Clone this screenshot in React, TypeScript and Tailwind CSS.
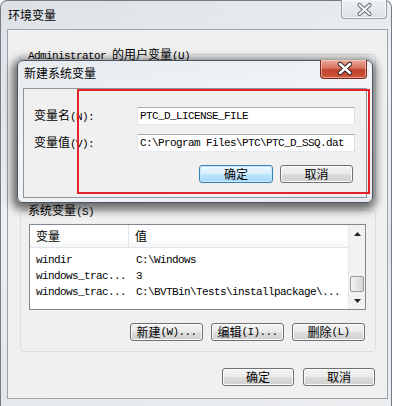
import React from "react";

const Mx = ({ s }: { s: string }) => (
  <>
    {(s.match(/[\x00-\x7f]+|[^\x00-\x7f]+/g) || []).map((p, i) =>
      /^[\x00-\x7f]/.test(p) ? (
        <span key={i} className="font-['Liberation_Mono',monospace] text-[11px] tracking-[-0.6px] whitespace-pre">
          {p}
        </span>
      ) : (
        <span key={i} className="text-[12px]">
          {p}
        </span>
      )
    )}
  </>
);

const Btn = ({ label, w, primary }: { label: string; w: string; primary?: boolean }) => (
  <div
    className={
      primary
        ? `${w} h-[18px] rounded-[3px] border border-[#3c7fb1] bg-[linear-gradient(#eaf6fd,#d9f0fc_50%,#bee6fd_50%,#a7d9f5)] shadow-[inset_0_0_0_1px_#c4e8fb] flex items-center justify-center leading-[14px] text-black`
        : `${w} h-[18px] rounded-[3px] border border-[#707070] bg-[linear-gradient(#f2f2f2,#ebebeb_50%,#dddddd_50%,#cfcfcf)] shadow-[inset_0_0_0_1px_#fbfbfb] flex items-center justify-center leading-[14px] text-black`
    }
  >
    <Mx s={label} />
  </div>
);

const CloseGray = () => (
  <div className="-mt-[1px] mr-[4px] w-[46px] h-[19px] rounded-b-[4px] border border-t-0 border-[#9aa1a9] bg-[linear-gradient(#eef0f2,#dde1e5)] shadow-[inset_0_0_0_1px_#f7f8f9]">
    <svg width="44" height="18" viewBox="0 0 44 18">
      <path d="M17.5 5 L27.5 14 M27.5 5 L17.5 14" stroke="#6d737a" strokeWidth="4.2" strokeLinecap="round" />
      <path d="M17.5 5 L27.5 14 M27.5 5 L17.5 14" stroke="#f4f5f6" strokeWidth="2" strokeLinecap="round" />
    </svg>
  </div>
);

const CloseRed = () => (
  <div className="-mt-[1px] mr-[5px] w-[47px] h-[19px] rounded-b-[4px] border border-t-0 border-[#7a2a22] bg-[linear-gradient(#e9a99c,#d9735f_45%,#c2412b_55%,#cf5a3c)] shadow-[inset_0_0_0_1px_rgba(255,220,210,0.55)]">
    <svg width="45" height="18" viewBox="0 0 45 18">
      <path d="M19 4 L29 13 M29 4 L19 13" stroke="#3b2a28" strokeWidth="4.6" strokeLinecap="round" />
      <path d="M19 4 L29 13 M29 4 L19 13" stroke="#ffffff" strokeWidth="2.4" strokeLinecap="round" />
    </svg>
  </div>
);

const Row = ({ a, b }: { a: string; b: string }) => (
  <div className="h-[16px] flex items-center leading-[14px]">
    <div className="w-[100px] pl-[6px]">
      <Mx s={a} />
    </div>
    <div className="pl-[6px]">
      <Mx s={b} />
    </div>
  </div>
);

export default function App() {
  return (
    <div className="w-[394px] h-[406px] bg-white relative overflow-hidden font-['Noto_Sans_CJK_SC',sans-serif] text-[12px] text-black">
      {/* outer window */}
      <div className="w-[392px] h-[406px] flex flex-col rounded-t-[7px] border border-b-0 border-[#737c86] bg-[linear-gradient(160deg,#dde1e6,#eef0f2_40%,#e4e7ea_70%,#eceef0)]">
        <div className="h-[28px] flex items-start justify-between">
          <div className="pl-[7px] pt-[7px] leading-[14px] text-[12px]">环境变量</div>
          <CloseGray />
        </div>
        <div className="ml-[6px] mr-[3px] h-[370px] border border-[#9ca3ab] bg-[#f0f0f0] flex flex-col">
          <fieldset className="mt-[17px] ml-[12px] mr-[11px] h-[151px] border border-[#d5dfe5] rounded-[3px] p-0 min-w-0">
            <legend className="ml-[6px] px-[1px] h-[14px] leading-[14px]">
              <Mx s="Administrator 的用户变量(U)" />
            </legend>
          </fieldset>
          <fieldset className="mt-[5px] ml-[12px] mr-[11px] border border-[#d5dfe5] rounded-[3px] px-0 pt-[7px] pb-[10px] min-w-0">
            <legend className="ml-[6px] px-[1px] h-[14px] leading-[14px]">
              <Mx s="系统变量(S)" />
            </legend>
            <div className="ml-[8px] w-[337px] h-[86px] border border-[#828790] bg-white flex">
              <div className="flex-1 flex flex-col">
                <div className="h-[23px] flex border-b border-[#e2e4e7] bg-[linear-gradient(#ffffff,#ffffff_60%,#f6f7f8)] leading-[14px]">
                  <div className="w-[99px] pl-[6px] flex items-center border-r border-[#e2e4e7]">变量</div>
                  <div className="pl-[6px] flex items-center">值</div>
                </div>
                <div className="pt-[3px]">
                  <Row a="windir" b="C:\Windows" />
                  <Row a="windows_trac..." b="3" />
                  <Row a="windows_trac..." b="C:\BVTBin\Tests\installpackage\..." />
                </div>
              </div>
              <div className="w-[17px] flex flex-col bg-[#f2f2f2] border-l border-[#eaeaea]">
                <div className="h-[17px] flex items-center justify-center">
                  <svg width="7" height="4" viewBox="0 0 7 4">
                    <path d="M0 4 L3.5 0 L7 4 Z" fill="#222" />
                  </svg>
                </div>
                <div className="flex-1" />
                <div className="h-[16px] mx-[1px] rounded-[2px] border border-[#9a9a9a] bg-[linear-gradient(90deg,#f4f4f4,#e4e4e4_50%,#d6d6d6)]" />
                <div className="h-[17px] flex items-center justify-center">
                  <svg width="7" height="4" viewBox="0 0 7 4">
                    <path d="M0 0 L3.5 4 L7 0 Z" fill="#222" />
                  </svg>
                </div>
              </div>
            </div>
            <div className="mt-[13px] pr-[10px] flex justify-end gap-[8px]">
              <Btn label="新建(W)..." w="w-[73px]" />
              <Btn label="编辑(I)..." w="w-[73px]" />
              <Btn label="删除(L)" w="w-[73px]" />
            </div>
          </fieldset>
          <div className="mt-[16px] pr-[12px] flex justify-end gap-[9px]">
            <Btn label="确定" w="w-[72px]" />
            <Btn label="取消" w="w-[72px]" />
          </div>
        </div>
      </div>

      {/* overlaid dialog window */}
      <div className="absolute left-[17px] top-[60px] w-[356px] h-[143px] rounded-[6px] border border-[#4a5561] bg-[linear-gradient(170deg,#e6eaee,#f4f6f8_45%,#e9ecef)] shadow-[-1px_3px_9px_4px_rgba(0,0,0,0.55)] flex flex-col">
        <div className="h-[27px] flex items-start justify-between">
          <div className="pl-[6px] pt-[5px] leading-[14px] text-[12px]">新建系统变量</div>
          <CloseRed />
        </div>
        <div className="mx-[5px] h-[110px] border border-[#8e949b] bg-[#f0f0f0] pt-[18px] flex flex-col">
          <div className="flex items-center">
            <div className="w-[113px] pl-[10px] leading-[14px]">
              <Mx s="变量名(N):" />
            </div>
            <div className="w-[218px] h-[18px] border border-[#abadb3] border-l-[#e2e3ea] border-r-[#dbdfe6] border-b-[#e3e9ef] bg-white pl-[2px] flex items-center leading-[14px]">
              <Mx s="PTC_D_LICENSE_FILE" />
            </div>
          </div>
          <div className="mt-[9px] flex items-center">
            <div className="w-[113px] pl-[10px] leading-[14px]">
              <Mx s="变量值(V):" />
            </div>
            <div className="w-[218px] h-[18px] border border-[#abadb3] border-l-[#e2e3ea] border-r-[#dbdfe6] border-b-[#e3e9ef] bg-white pl-[2px] flex items-center leading-[14px] overflow-hidden">
              <Mx s="C:\Program Files\PTC\PTC_D_SSQ.dat" />
            </div>
          </div>
          <div className="mt-[13px] pr-[13px] flex justify-end gap-[7px]">
            <Btn label="确定" w="w-[74px]" primary />
            <Btn label="取消" w="w-[73px]" />
          </div>
        </div>
      </div>

      {/* red annotation frame */}
      <div className="absolute left-[77px] top-[89px] w-[293px] h-[105px] border-2 border-[#e3222b]" />
    </div>
  );
}
